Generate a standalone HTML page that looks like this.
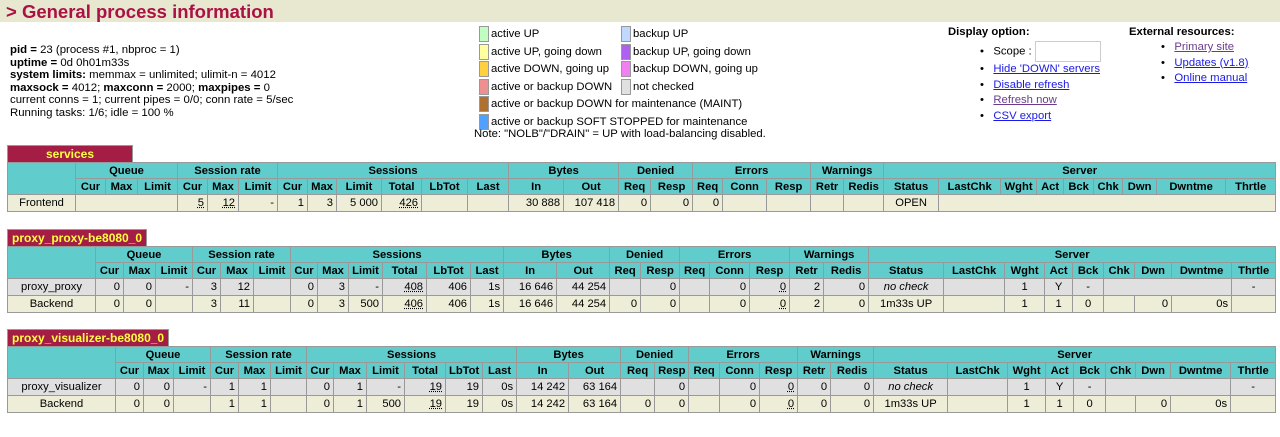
<!DOCTYPE html>
<html><head><meta charset="utf-8"><style>
*{box-sizing:border-box}
body{margin:0;width:1280px;height:437px;background:#fff;font-family:"Liberation Sans",Arial,sans-serif;font-size:11px;color:#000;position:relative;overflow:hidden}
.title{position:absolute;left:0;top:0;width:1280px;height:22px;background:#e8e8d0;color:#aa1144;font-weight:bold;font-size:18.5px;line-height:23px;padding-left:6px}
.info{position:absolute;left:10px;top:44px;line-height:12.6px;font-size:11.4px}
.leg{position:absolute;font-size:11.3px;line-height:13px}
.leg span{display:inline-block;width:10px;height:16px;border:1px solid #999;vertical-align:middle;margin-right:2px}
.opt{position:absolute;font-size:11.3px}
.opt a{color:#1a1ae6;text-decoration:underline}
.opt a.v{color:#6a3b8e}
.sec{position:absolute;left:7px}
.tab{display:inline-block;height:17px;background:#a31d45;color:#ffff40;font-weight:bold;font-size:12px;line-height:16px;padding:0 4px;border:1px solid #999;border-bottom:none}
table{border-collapse:collapse;table-layout:fixed;width:1268px}
td,th{border:1px solid #999;padding:0 3px;height:17px;font-size:11.2px;white-space:nowrap;overflow:hidden}
th{background:#60cccc;font-weight:bold;text-align:center;height:16px}
td{text-align:right}
td.n{text-align:center}
td.c{text-align:center}
tr.f td{background:#eeeed8}
tr.b td{background:#eeeed8}
tr.s td{background:#e0e0e0}
u{text-decoration:underline dotted}
</style></head><body>
<div class="title">&gt; General process information</div>
<div class="info"><b>pid = </b>23 (process #1, nbproc = 1)<br><b>uptime = </b>0d 0h01m33s<br><b>system limits:</b> memmax = unlimited; ulimit-n = 4012<br><b>maxsock = </b>4012; <b>maxconn = </b>2000; <b>maxpipes = </b>0<br>current conns = 1; current pipes = 0/0; conn rate = 5/sec<br>Running tasks: 1/6; idle = 100 %</div>

<div class="leg" style="left:479px;top:26px">
<div style="height:17.5px"><span style="background:#c0ffc0"></span>active UP</div>
<div style="height:17.5px"><span style="background:#ffffa0"></span>active UP, going down</div>
<div style="height:17.5px"><span style="background:#ffd040"></span>active DOWN, going up</div>
<div style="height:17.5px"><span style="background:#ee9090"></span>active or backup DOWN</div>
<div style="height:17.5px"><span style="background:#b07030"></span>active or backup DOWN for maintenance (MAINT)</div>
<div style="height:17.5px"><span style="background:#50a0ff"></span>active or backup SOFT STOPPED for maintenance</div>
</div>
<div class="leg" style="left:621px;top:26px">
<div style="height:17.5px"><span style="background:#c0d8ff"></span>backup UP</div>
<div style="height:17.5px"><span style="background:#b060f0"></span>backup UP, going down</div>
<div style="height:17.5px"><span style="background:#f080f0"></span>backup DOWN, going up</div>
<div style="height:17.5px"><span style="background:#e0e0e0"></span>not checked</div>
</div>
<div class="leg" style="left:474px;top:128px">Note: "NOLB"/"DRAIN" = UP with load-balancing disabled.</div>

<div class="opt" style="left:948px;top:26px"><b>Display option:</b></div>
<div class="opt" style="left:980px;top:41px;line-height:15.5px">
<div>•&nbsp;&nbsp; Scope : <span style="display:inline-block;width:66px;height:21px;border:1px solid #ccc;vertical-align:middle"></span></div>
<div>•&nbsp;&nbsp; <a>Hide 'DOWN' servers</a></div>
<div>•&nbsp;&nbsp; <a>Disable refresh</a></div>
<div>•&nbsp;&nbsp; <a class="v">Refresh now</a></div>
<div>•&nbsp;&nbsp; <a>CSV export</a></div>
</div>
<div class="opt" style="left:1129px;top:26px"><b>External resources:</b></div>
<div class="opt" style="left:1161px;top:40px;line-height:15.5px">
<div>•&nbsp;&nbsp; <a class="v">Primary site</a></div>
<div>•&nbsp;&nbsp; <a>Updates (v1.8)</a></div>
<div>•&nbsp;&nbsp; <a>Online manual</a></div>
</div>

<div class="sec" style="top:145px">
<div class="tab" style="width:126px;text-align:center">services</div>
<table>
<colgroup><col width="68"><col width="30"><col width="32"><col width="40"><col width="30"><col width="31"><col width="39"><col width="30"><col width="29"><col width="45"><col width="40"><col width="46"><col width="41"><col width="55"><col width="55"><col width="32"><col width="42"><col width="30"><col width="44"><col width="44"><col width="33"><col width="40"><col width="55"><col width="62"><col width="36"><col width="27"><col width="30"><col width="29"><col width="34"><col width="69"><col width="50"></colgroup>
<tr><th rowspan="2"></th><th colspan="3">Queue</th><th colspan="3">Session rate</th><th colspan="6">Sessions</th><th colspan="2">Bytes</th><th colspan="2">Denied</th><th colspan="3">Errors</th><th colspan="2">Warnings</th><th colspan="9">Server</th></tr>
<tr><th>Cur</th><th>Max</th><th>Limit</th><th>Cur</th><th>Max</th><th>Limit</th><th>Cur</th><th>Max</th><th>Limit</th><th>Total</th><th>LbTot</th><th>Last</th><th>In</th><th>Out</th><th>Req</th><th>Resp</th><th>Req</th><th>Conn</th><th>Resp</th><th>Retr</th><th>Redis</th><th>Status</th><th>LastChk</th><th>Wght</th><th>Act</th><th>Bck</th><th>Chk</th><th>Dwn</th><th>Dwntme</th><th>Thrtle</th></tr>
<tr class="f"><td class="n">Frontend</td><td colspan="3"></td><td><u>5</u></td><td><u>12</u></td><td>-</td><td>1</td><td>3</td><td>5 000</td><td><u>426</u></td><td></td><td></td><td>30 888</td><td>107 418</td><td>0</td><td>0</td><td>0</td><td></td><td></td><td></td><td></td><td class="c">OPEN</td><td colspan="8"></td></tr>
</table></div>

<div class="sec" style="top:229px">
<div class="tab">proxy_proxy-be8080_0</div>
<table>
<colgroup><col width="88"><col width="28"><col width="32"><col width="37"><col width="28"><col width="33"><col width="37"><col width="27"><col width="31"><col width="34"><col width="44"><col width="44"><col width="33"><col width="53"><col width="53"><col width="31"><col width="39"><col width="30"><col width="40"><col width="40"><col width="34"><col width="45"><col width="75"><col width="61"><col width="40"><col width="28"><col width="31"><col width="31"><col width="37"><col width="60"><col width="44"></colgroup>
<tr><th rowspan="2"></th><th colspan="3">Queue</th><th colspan="3">Session rate</th><th colspan="6">Sessions</th><th colspan="2">Bytes</th><th colspan="2">Denied</th><th colspan="3">Errors</th><th colspan="2">Warnings</th><th colspan="9">Server</th></tr>
<tr><th>Cur</th><th>Max</th><th>Limit</th><th>Cur</th><th>Max</th><th>Limit</th><th>Cur</th><th>Max</th><th>Limit</th><th>Total</th><th>LbTot</th><th>Last</th><th>In</th><th>Out</th><th>Req</th><th>Resp</th><th>Req</th><th>Conn</th><th>Resp</th><th>Retr</th><th>Redis</th><th>Status</th><th>LastChk</th><th>Wght</th><th>Act</th><th>Bck</th><th>Chk</th><th>Dwn</th><th>Dwntme</th><th>Thrtle</th></tr>
<tr class="s"><td class="n">proxy_proxy</td><td>0</td><td>0</td><td>-</td><td>3</td><td>12</td><td></td><td>0</td><td>3</td><td>-</td><td><u>408</u></td><td>406</td><td>1s</td><td>16 646</td><td>44 254</td><td></td><td>0</td><td></td><td>0</td><td><u>0</u></td><td>2</td><td>0</td><td class="c"><i>no check</i></td><td></td><td class="c">1</td><td class="c">Y</td><td class="c">-</td><td colspan="3"></td><td class="c">-</td></tr>
<tr class="b"><td class="n">Backend</td><td>0</td><td>0</td><td></td><td>3</td><td>11</td><td></td><td>0</td><td>3</td><td>500</td><td><u>406</u></td><td>406</td><td>1s</td><td>16 646</td><td>44 254</td><td>0</td><td>0</td><td></td><td>0</td><td><u>0</u></td><td>2</td><td>0</td><td class="c">1m33s UP</td><td></td><td class="c">1</td><td class="c">1</td><td class="c">0</td><td></td><td>0</td><td>0s</td><td></td></tr>
</table></div>

<div class="sec" style="top:329px">
<div class="tab">proxy_visualizer-be8080_0</div>
<table>
<colgroup><col width="108"><col width="28"><col width="30"><col width="37"><col width="28"><col width="32"><col width="36"><col width="27"><col width="33"><col width="38"><col width="41"><col width="37"><col width="34"><col width="52"><col width="52"><col width="34"><col width="34"><col width="31"><col width="40"><col width="38"><col width="33"><col width="43"><col width="74"><col width="60"><col width="38"><col width="28"><col width="32"><col width="30"><col width="35"><col width="60"><col width="45"></colgroup>
<tr><th rowspan="2"></th><th colspan="3">Queue</th><th colspan="3">Session rate</th><th colspan="6">Sessions</th><th colspan="2">Bytes</th><th colspan="2">Denied</th><th colspan="3">Errors</th><th colspan="2">Warnings</th><th colspan="9">Server</th></tr>
<tr><th>Cur</th><th>Max</th><th>Limit</th><th>Cur</th><th>Max</th><th>Limit</th><th>Cur</th><th>Max</th><th>Limit</th><th>Total</th><th>LbTot</th><th>Last</th><th>In</th><th>Out</th><th>Req</th><th>Resp</th><th>Req</th><th>Conn</th><th>Resp</th><th>Retr</th><th>Redis</th><th>Status</th><th>LastChk</th><th>Wght</th><th>Act</th><th>Bck</th><th>Chk</th><th>Dwn</th><th>Dwntme</th><th>Thrtle</th></tr>
<tr class="s"><td class="n">proxy_visualizer</td><td>0</td><td>0</td><td>-</td><td>1</td><td>1</td><td></td><td>0</td><td>1</td><td>-</td><td><u>19</u></td><td>19</td><td>0s</td><td>14 242</td><td>63 164</td><td></td><td>0</td><td></td><td>0</td><td><u>0</u></td><td>0</td><td>0</td><td class="c"><i>no check</i></td><td></td><td class="c">1</td><td class="c">Y</td><td class="c">-</td><td colspan="3"></td><td class="c">-</td></tr>
<tr class="b"><td class="n">Backend</td><td>0</td><td>0</td><td></td><td>1</td><td>1</td><td></td><td>0</td><td>1</td><td>500</td><td><u>19</u></td><td>19</td><td>0s</td><td>14 242</td><td>63 164</td><td>0</td><td>0</td><td></td><td>0</td><td><u>0</u></td><td>0</td><td>0</td><td class="c">1m33s UP</td><td></td><td class="c">1</td><td class="c">1</td><td class="c">0</td><td></td><td>0</td><td>0s</td><td></td></tr>
</table></div>
</body></html>
